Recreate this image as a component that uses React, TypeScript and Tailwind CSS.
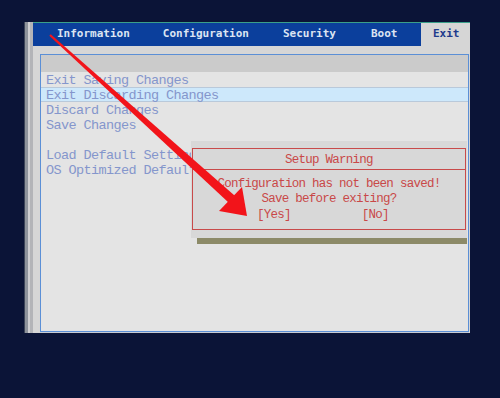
import React from "react";

const rows: { label: string; hl?: boolean }[] = [
  { label: "Exit Saving Changes" },
  { label: "Exit Discarding Changes", hl: true },
  { label: "Discard Changes" },
  { label: "Save Changes" },
  { label: "" },
  { label: "Load Default Settings" },
  { label: "OS Optimized Defaults" },
];

export default function App() {
  return (
    <div className="relative w-[500px] h-[398px] bg-[#0b1437] overflow-hidden pt-[22px] pl-[24px]">
      {/* window */}
      <div className="flex w-[446px] h-[311px]">
        {/* left bevel stripes */}
        <div className="flex h-full">
          <div className="w-[1px] bg-[#3c4458]" />
          <div className="w-[3px] bg-[#8e939c]" />
          <div className="w-[2px] bg-[#cfcfd2]" />
          <div className="w-[3px] bg-[#b3b4b8]" />
        </div>
        {/* main column */}
        <div className="flex flex-col w-[437px] h-full">
          <div className="h-[1px] bg-[#3aa08a]" />
          <div className="flex h-[23px]">
            <div className="flex-1 bg-[#0b3f9c] flex items-center pl-[24px] gap-[33px] font-['DejaVu_Sans_Mono',monospace] font-bold text-[11px] text-[#dbe4f2]">
              <span>Information</span>
              <span>Configuration</span>
              <span className="ml-[1px]">Security</span>
              <span className="ml-[2px]">Boot</span>
            </div>
            <div className="w-[49px] bg-[#d6d6d6] flex items-center pl-[12px] font-['DejaVu_Sans_Mono',monospace] font-bold text-[11px] text-[#1d3a8c]">
              Exit
            </div>
          </div>
          <div className="flex-1 bg-[#d6d6d6] pl-[7px] pt-[8px] pr-[1px] flex flex-col">
            <div className="relative flex-1 border border-[#5b8fd6] bg-[#e4e4e4] flex flex-col">
              <div className="h-[17px] bg-[#cbcbcb]" />
              <div className="flex flex-col font-['Liberation_Mono',monospace] text-[13.5px] tracking-[-0.6px] text-[#8496cc]">
                {rows.map((r, i) =>
                  r.hl ? (
                    <div
                      key={i}
                      className="h-[15px] box-border border-y border-[#b9c9da] bg-[#cde8fb] pl-[5px] leading-[15px] whitespace-pre"
                    >
                      {r.label}
                    </div>
                  ) : (
                    <div key={i} className="h-[15px] pl-[5px] leading-[17px] whitespace-pre">
                      {r.label}
                    </div>
                  )
                )}
              </div>

              {/* dialog */}
              <div className="absolute left-[150px] top-[86px] w-[276px] h-[97px] bg-[#d8d8d8] pt-[7px] pl-[1px]">
                <div className="w-[274px] h-[82px] border border-[#c84a4a] flex flex-col font-['Liberation_Mono',monospace] text-[12.5px] tracking-[-0.75px] text-[#c94848]">
                  <div className="h-[21px] border-b border-[#c84a4a] flex items-center justify-center leading-[15px] pt-[2px]">
                    Setup Warning
                  </div>
                  <div className="pt-[7px] flex flex-col items-center leading-[15px]">
                    <div>Configuration has not been saved!</div>
                    <div>Save before exiting?</div>
                  </div>
                  <div className="flex pl-[64px] gap-[71px] leading-[15px] mt-[1px]">
                    <span>[Yes]</span>
                    <span>[No]</span>
                  </div>
                </div>
              </div>
              <div className="absolute left-[156px] top-[183px] w-[270px] h-[6px] bg-[#8c8a68]" />
            </div>
            <div className="h-[1px] bg-[#c8ccd4]" />
          </div>
        </div>
      </div>

      {/* red arrow overlay */}
      <svg
        className="absolute left-0 top-0 pointer-events-none"
        width="500"
        height="398"
        viewBox="0 0 500 398"
      >
        <polygon
          points="49.3,35.7 50.7,34.3 234.5,195.5 228.5,202.5"
          fill="#f2141a"
        />
        <polygon points="247,216 219,211 242,187" fill="#f2141a" />
      </svg>
    </div>
  );
}
